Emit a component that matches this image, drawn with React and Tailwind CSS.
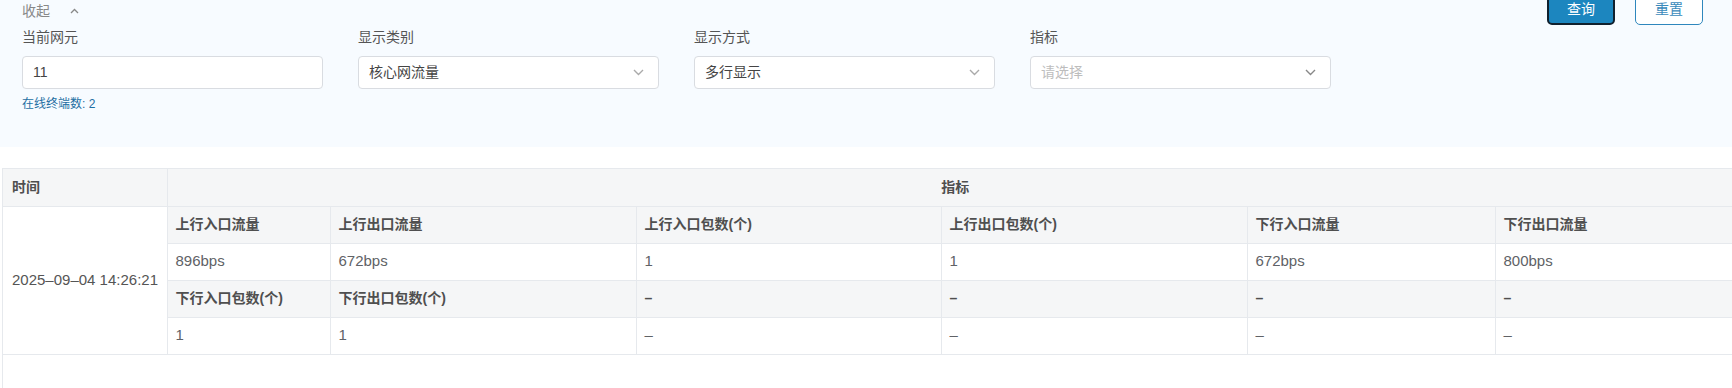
import React from "react";

const FONT = "font-['Liberation_Sans','Noto_Sans_CJK_SC',sans-serif]";

// column widths of the result table (px)
const COLS = [164, 163, 306, 305, 306, 248, 248];

const rows = [
  { head: true, cells: ["上行入口流量", "上行出口流量", "上行入口包数(个)", "上行出口包数(个)", "下行入口流量", "下行出口流量"] },
  { head: false, cells: ["896bps", "672bps", "1", "1", "672bps", "800bps"] },
  { head: true, cells: ["下行入口包数(个)", "下行出口包数(个)", "–", "–", "–", "–"] },
  { head: false, cells: ["1", "1", "–", "–", "–", "–"] },
];

function ChevronDown({ className = "" }) {
  return (
    <svg width="11" height="7" viewBox="0 0 11 7" className={className} fill="none">
      <polyline points="1,1 5.5,5.5 10,1" stroke="currentColor" strokeWidth="1.4" />
    </svg>
  );
}

function Field({ label, children, hint }) {
  return (
    <div className="flex flex-col w-[301px]">
      <div className="text-[14px] leading-[22px] text-[#555]">{label}</div>
      <div className="mt-[8px]">{children}</div>
      {hint && <div className="mt-[6px] text-[12px] leading-[18px] text-[#1f6fa3]">{hint}</div>}
    </div>
  );
}

function SelectBox({ value, placeholder, dark }) {
  return (
    <div className="h-[33px] rounded-[4px] border border-[#d9dce1] bg-white flex items-center justify-between pl-[10px] pr-[14px]">
      {value ? (
        <span className="text-[14px] text-[#444]">{value}</span>
      ) : (
        <span className="text-[14px] text-[#bdbdbd]">{placeholder}</span>
      )}
      <ChevronDown className={dark ? "text-[#888]" : "text-[#aaa]"} />
    </div>
  );
}

export default function App() {
  return (
    <div className={`${FONT} w-full h-[388px] overflow-hidden bg-white flex flex-col`}>
      {/* 查询条件 */}
      <div className="h-[147px] shrink-0 bg-[#f7fbff] px-[22px]">
        <div className="h-[22px] flex items-start justify-between">
          <div className="flex items-center gap-[20px] text-[14px] leading-[22px] text-[#888]">
            <span>收起</span>
            <svg width="9" height="6" viewBox="0 0 9 6" fill="none">
              <polyline points="1,5 4.5,1.5 8,5" stroke="#888" strokeWidth="1.3" />
            </svg>
          </div>
          <div className="flex gap-[20px] -mt-[7px] mr-[7px]">
            <button className="w-[68px] h-[32px] rounded-[5px] bg-[#1c86bf] border-2 border-[#10202e] text-white text-[14px]">
              查询
            </button>
            <button className="w-[68px] h-[32px] rounded-[5px] bg-white border border-[#2f87bd] text-[#3a8abb] text-[14px]">
              重置
            </button>
          </div>
        </div>
        <div className="mt-[4px] flex gap-[35px]">
          <Field label="当前网元" hint="在线终端数: 2">
            <div className="h-[33px] rounded-[4px] border border-[#d9dce1] bg-white flex items-center pl-[10px] text-[14px] text-[#444]">
              11
            </div>
          </Field>
          <Field label="显示类别">
            <SelectBox value="核心网流量" />
          </Field>
          <Field label="显示方式">
            <SelectBox value="多行显示" />
          </Field>
          <Field label="指标">
            <SelectBox placeholder="请选择" dark />
          </Field>
        </div>
      </div>

      {/* 结果表格 */}
      <div className="mt-[21px] ml-[2px] flex-1 border-l border-t border-[#e6e9ed] w-[1740px]">
        <table className="table-fixed border-collapse w-[1740px] text-[14px]">
          <colgroup>
            {COLS.map((w, i) => (
              <col key={i} style={{ width: w }} />
            ))}
          </colgroup>
          <thead>
            <tr className="h-[37px] bg-[#f5f6f7]">
              <th className="text-left font-semibold text-[#4f4f4f] pl-[9px] border-r border-b border-[#e6e9ed]">时间</th>
              <th colSpan={6} className="text-center font-semibold text-[#4f4f4f] border-b border-[#e6e9ed]">指标</th>
            </tr>
          </thead>
          <tbody>
            {rows.map((r, ri) => (
              <tr key={ri} className={`h-[37px] ${r.head ? "bg-[#f5f6f7]" : "bg-white"}`}>
                {ri === 0 && (
                  <td rowSpan={4} className="bg-white pl-[9px] text-[15px] text-[#555] border-r border-b border-[#e6e9ed] align-middle">
                    2025–09–04 14:26:21
                  </td>
                )}
                {r.cells.map((c, ci) => (
                  <td
                    key={ci}
                    className={`pl-[8px] border-r border-b border-[#e6e9ed] ${
                      r.head ? "font-semibold text-[#4f4f4f]" : "text-[15px] text-[#606266]"
                    }`}
                  >
                    {c}
                  </td>
                ))}
              </tr>
            ))}
          </tbody>
        </table>
      </div>
    </div>
  );
}
